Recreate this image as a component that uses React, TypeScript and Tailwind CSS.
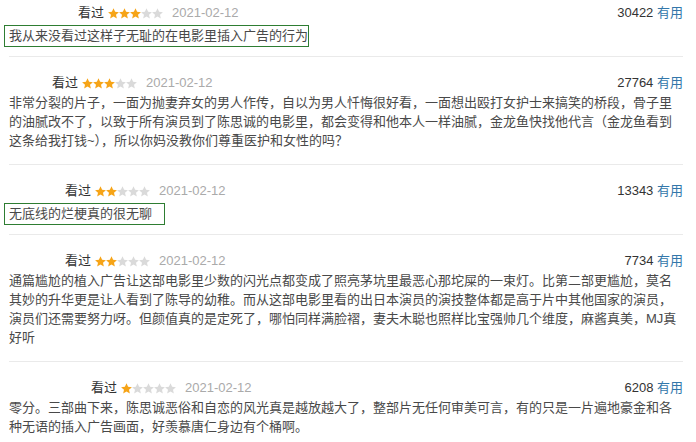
import React from "react";

type Review = {
  pad: number;
  stars: number;
  votes: string;
  text: string;
  box?: number;
};

const reviews: Review[] = [
  { pad: 69, stars: 3, votes: "30422", text: "我从来没看过这样子无耻的在电影里插入广告的行为", box: 305 },
  {
    pad: 43,
    stars: 3,
    votes: "27764",
    text:
      "非常分裂的片子，一面为抛妻弃女的男人作传，自以为男人忏悔很好看，一面想出殴打女护士来搞笑的桥段，骨子里的油腻改不了，以致于所有演员到了陈思诚的电影里，都会变得和他本人一样油腻，金龙鱼快找他代言（金龙鱼看到这条给我打钱~），所以你妈没教你们尊重医护和女性的吗？",
  },
  { pad: 56, stars: 2, votes: "13343", text: "无底线的烂梗真的很无聊", box: 161 },
  {
    pad: 56,
    stars: 2,
    votes: "7734",
    text:
      "通篇尴尬的植入广告让这部电影里少数的闪光点都变成了照亮茅坑里最恶心那坨屎的一束灯。比第二部更尴尬，莫名其妙的升华更是让人看到了陈导的幼稚。而从这部电影里看的出日本演员的演技整体都是高于片中其他国家的演员，演员们还需要努力呀。但颜值真的是定死了，哪怕同样满脸褶，妻夫木聪也照样比宝强帅几个维度，麻酱真美，MJ真好听",
  },
  {
    pad: 82,
    stars: 1,
    votes: "6208",
    text:
      "零分。三部曲下来，陈思诚恶俗和自恋的风光真是越放越大了，整部片无任何审美可言，有的只是一片遍地豪金和各种无语的插入广告画面，好羡慕唐仁身边有个桶啊。",
  },
];

function Star({ on }: { on: boolean }) {
  return (
    <svg width="11" height="11" viewBox="1 1.5 22 21" className="block">
      <path
        d="M12 1.5l3.2 7.1 7.6.7-5.8 5.1 1.7 7.6L12 18l-6.7 4 1.7-7.6-5.8-5.1 7.6-.7z"
        fill={on ? "#f6a417" : "#dadada"}
      />
    </svg>
  );
}

export default function App() {
  return (
    <div
      className="w-[696px] h-[442px] overflow-hidden bg-white"
      style={{ fontFamily: '"Liberation Sans", Arial, "Noto Sans CJK SC", sans-serif' }}
    >
      <div className="ml-[9px] w-[674px]">
        {reviews.map((r, i) => (
          <div
            key={i}
            className={`border-b border-[#eaeaea] ${i === 0 ? "pt-[3px]" : "pt-[16px]"} ${
              r.box ? "pb-[9px]" : "pb-[14px]"
            }`}
          >
            <div className="flex items-center h-5 text-[13px] leading-5">
              <span className="shrink-0" style={{ width: r.pad }} />
              <span className="text-[#333]">看过</span>
              <span className="flex ml-[4px]">
                {[0, 1, 2, 3, 4].map((k) => (
                  <Star key={k} on={k < r.stars} />
                ))}
              </span>
              <span className="ml-[9px] text-[#aaa]">2021-02-12</span>
              <span className="ml-auto text-[#333]">
                {r.votes} <span className="text-[#3377aa]">有用</span>
              </span>
            </div>
            {r.box ? (
              <div
                className="mt-[2px] -ml-[5px] pl-[4px] border border-[#2e7d32] text-[13px] leading-[20px] text-[#494949]"
                style={{ width: r.box }}
              >
                {r.text}
              </div>
            ) : (
              <div className="text-[13px] leading-[19px] text-[#494949]">{r.text}</div>
            )}
          </div>
        ))}
      </div>
    </div>
  );
}
